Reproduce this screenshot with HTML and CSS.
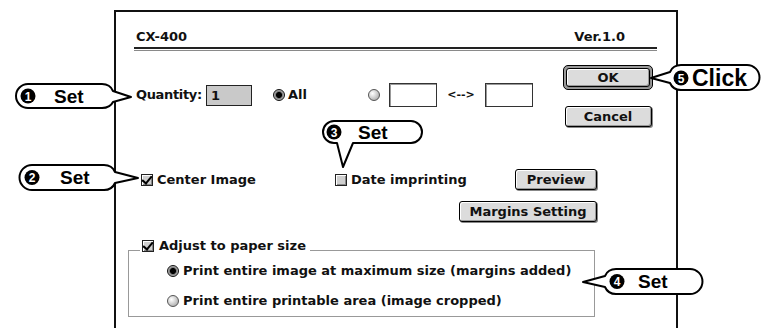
FILE: index.html
```html
<!DOCTYPE html>
<html>
<head>
<meta charset="utf-8">
<link rel="stylesheet" href="styles.css">
</head>
<body>
<div class="stage">
  <div class="dialog">
    <div class="head"><span>CX-400</span><span>Ver.1.0</span></div>
    <div class="rule"></div>
    <div class="top">
      <div class="row1">
        <span class="lbl qlbl">Quantity:</span>
        <span class="field qty">1</span>
        <span class="radio on r-all"></span><span class="lbl all">All</span>
        <span class="radio"></span>
        <span class="field range"></span>
        <span class="arrow">&lt;--&gt;</span>
        <span class="field range"></span>
      </div>
      <div class="btncol">
        <div class="default"><span class="btn ok">OK</span></div>
        <span class="btn cancel">Cancel</span>
      </div>
    </div>
    <div class="row2">
      <span class="chk c1"><span class="check on"></span>Center Image</span>
      <span class="chk"><span class="check"></span>Date imprinting</span>
      <span class="btn preview">Preview</span>
    </div>
    <div class="row3">
      <span class="btn margins">Margins Setting</span>
    </div>
    <fieldset class="group">
      <legend><span class="check on"></span>Adjust to paper size</legend>
      <div class="opts">
        <div class="opt"><span class="radio on"></span>Print entire image at maximum size (margins added)</div>
        <div class="opt opt2"><span class="radio"></span>Print entire printable area (image cropped)</div>
      </div>
    </fieldset>
  </div>
  <svg class="callouts" width="761" height="328" viewBox="0 0 761 328">
    <g class="bubble">
      <path d="M28,84 H102 Q110,84 113,91 L131,97 L113,102 Q110,108 102,108 H28 A12,12 0 0 1 28,84 Z"/>
      <path d="M32,165 H104 Q112,165 115,172 L138,178 L115,183 Q112,190 104,190 H32 A12.5,12.5 0 0 1 32,165 Z"/>
      <path d="M334,121 H411 A11,11 0 0 1 411,143 H353 L343,167 L337,143 H334 A11,11 0 0 1 334,121 Z"/>
      <path d="M690,269 H616 Q608,269 605,276 L583,282 L605,287 Q608,294 616,294 H690 A12.5,12.5 0 0 0 690,269 Z"/>
      <path d="M747,65 H681 Q673,65 670,72 L651,78 L670,83 Q673,90 681,90 H747 A12.5,12.5 0 0 0 747,65 Z"/>
    </g>
    <g class="nums">
      <circle cx="28" cy="96" r="7.5"/>
      <circle cx="32" cy="177.5" r="7.5"/>
      <circle cx="334" cy="132" r="7.5"/>
      <circle cx="617" cy="281.5" r="7.5"/>
      <circle cx="681" cy="78" r="7.5"/>
    </g>
    <text class="dg" x="28" y="100.5">1</text><text class="cw" x="54" y="103">Set</text>
    <text class="dg" x="32" y="182">2</text><text class="cw" x="60" y="184">Set</text>
    <text class="dg" x="334" y="136.5">3</text><text class="cw" x="358" y="139">Set</text>
    <text class="dg" x="617" y="286">4</text><text class="cw" x="638" y="288">Set</text>
    <text class="dg" x="681" y="82.5">5</text><text class="cw big" x="692" y="86">Click</text>
  </svg>
</div>
</body>
</html>
```
FILE: styles.css
```css
* { box-sizing: border-box; }
html, body { margin: 0; padding: 0; background: #fff; }
.stage {
  position: relative;
  width: 761px;
  height: 328px;
  overflow: hidden;
  padding: 10px 0 0 114px;
  font-family: "DejaVu Sans", "Noto Sans", sans-serif;
  font-weight: bold;
  font-size: 13px;
  line-height: 16px;
  color: #111;
}
.dialog {
  width: 564px;
  height: 330px;
  border: 2px solid #111;
  border-bottom: none;
  padding: 0 19px 0 20px;
}
.head {
  display: flex;
  justify-content: space-between;
  padding: 17px 32px 0 0;
}
.rule {
  margin: 2px 0 0 -2px;
  height: 4px;
  border-top: 2px solid #222;
  border-bottom: 1px solid #8a8a8a;
}
.top {
  display: flex;
  align-items: flex-start;
  margin-top: 14px;
}
.row1 {
  display: flex;
  align-items: center;
  height: 24px;
  margin-top: 18px;
}
.qlbl { width: 70px; letter-spacing: -0.35px; }
.field {
  display: inline-block;
  border: 1px solid #333;
  background: #fff;
  box-shadow: inset 1px 1px 0 #999;
}
.qty {
  width: 46px;
  height: 21px;
  background: #c9c9c9;
  padding: 2px 0 0 4px;
  box-shadow: none;
  border: 1px solid #222;
}
.r-all { margin-left: 21px; }
.all { margin-left: 3px; width: 80px; }
.range { width: 48px; height: 24px; margin-left: 9px; }
.arrow { font-size: 11px; width: 28px; margin-left: 10px; text-align: center; }
.arrow + .range { margin-left: 10px; }
.radio {
  display: inline-block;
  width: 12px;
  height: 12px;
  border-radius: 50%;
  border: 1px solid #555;
  background: radial-gradient(circle at 35% 35%, #fff 0, #ddd 35%, #999 100%);
  flex: none;
}
.radio.on {
  border-color: #111;
  background: radial-gradient(circle at 50% 50%, #000 0, #000 2.6px, #777 3.4px, #bbb 5px, #666 6px);
}
.check {
  display: inline-block;
  position: relative;
  width: 12px;
  height: 12px;
  border: 1px solid #222;
  background: #cfcfcf;
  box-shadow: inset 1px 1px 0 #fff, inset -1px -1px 0 #888;
  flex: none;
}
.check.on::after {
  content: "";
  position: absolute;
  left: 2px;
  top: -1px;
  width: 4px;
  height: 8px;
  border-right: 2px solid #000;
  border-bottom: 2px solid #000;
  transform: rotate(40deg);
}
.btncol {
  margin-left: auto;
  margin-right: 4px;
  width: 90px;
  display: flex;
  flex-direction: column;
  align-items: center;
}
.btn {
  display: flex;
  align-items: center;
  justify-content: center;
  height: 21px;
  border: 1px solid #000;
  border-radius: 3px;
  background: #dcdcdc;
  box-shadow: inset 1px 1px 0 #fff, inset -1px -1px 0 #999, 1px 1px 0 #888;
}
.default {
  width: 90px;
  height: 25px;
  border: 1px solid #000;
  border-radius: 5px;
  background: #9a9a9a;
  padding: 2px;
}
.ok { height: 19px; width: 84px; }
.cancel { width: 87px; margin-top: 16px; }
.row2 {
  display: flex;
  align-items: center;
  height: 21px;
  margin-top: 42px;
}
.chk { display: flex; align-items: center; gap: 4px; }
.c1 { width: 194px; margin-left: 5px; }
.preview { width: 82px; margin-left: auto; margin-right: 60px; }
.row3 {
  display: flex;
  justify-content: flex-end;
  margin-top: 11px;
}
.margins { width: 138px; margin-right: 60px; }
.group {
  margin: 16px 0 0 -8px;
  width: 467px;
  border: 1px solid #999;
  padding: 0 0 6px 0;
  min-width: 0;
}
.group legend {
  margin-left: 11px;
  padding: 0 4px 8px 2px;
  display: flex;
  align-items: center;
  gap: 5px;
}
.opts { padding-left: 38px; }
.opt {
  display: flex;
  align-items: center;
  gap: 4px;
  height: 18px;
  line-height: 18px;
}
.opt2 { margin-top: 12px; }
.callouts {
  position: absolute;
  left: 0;
  top: 0;
  pointer-events: none;
}
.bubble path { fill: #fff; stroke: #000; stroke-width: 2; stroke-linejoin: round; }
.nums circle { fill: #000; }
.dg { font-family: "Liberation Sans", Arial, sans-serif; font-weight: bold; font-size: 12px; fill: #fff; text-anchor: middle; }
.cw { font-family: "Liberation Sans", Arial, sans-serif; font-weight: bold; font-size: 19px; fill: #000; }
.cw.big { font-size: 23px; }
```
